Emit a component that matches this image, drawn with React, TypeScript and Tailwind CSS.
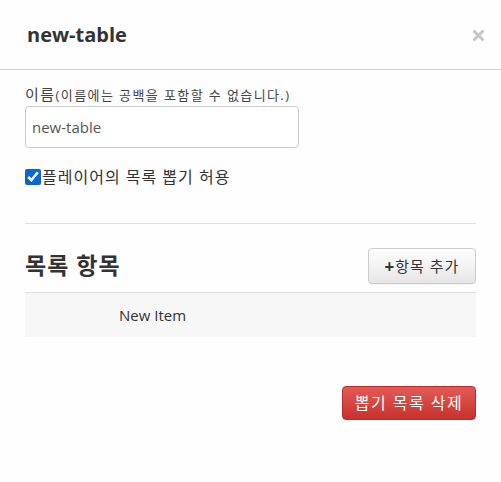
import React from "react";

const KR = { fontFamily: '"Open Sans", "Noto Sans CJK KR", sans-serif' };

export default function App() {
  return (
    <div className="w-[501px] h-[482px] bg-[#fefefe] text-[#333]" style={KR}>
      <div className="h-[70px] border-b border-[#d0d0d0] flex items-center justify-between pl-[27px] pr-[17px]">
        <h4 className="text-[20px] font-bold leading-none text-[#333]">new-table</h4>
        <svg width="11" height="11" viewBox="0 0 11 11" className="mt-[1px]">
          <path d="M1.5 1.5 L9.5 9.5 M9.5 1.5 L1.5 9.5" stroke="#c6c6c6" strokeWidth="3" strokeLinecap="square" />
        </svg>
      </div>
      <div className="px-[25px] pt-[14px]">
        <label className="block text-[15px] leading-[20px] text-[#444]">
          <span className="tracking-[1.5px]">이름</span>
          <span className="text-[13px] tracking-[1.4px]">(이름에는 공백을 포함할 수 없습니다.)</span>
        </label>
        <div className="mt-[1px] w-[274px] h-[42px] border border-[#ccc] rounded-[4px] bg-white flex items-center px-[6px] text-[15px] text-[#555]">
          new-table
        </div>
        <label className="mt-[19px] flex items-center text-[16px] leading-[20px] text-[#333]">
          <input type="checkbox" defaultChecked className="w-[16px] h-[16px] m-0 accent-[#0a66d8]" />
          <span className="ml-[1px] tracking-[1px]">플레이어의 목록 뽑기 허용</span>
        </label>
        <div className="mt-[36px] border-t border-[#e0e0e0]" />
        <div className="mt-[24px] flex items-center justify-between h-[36px]">
          <h3 className="text-[23px] font-bold text-[#333] leading-none tracking-[1px] mt-[-1px]">목록 항목</h3>
          <button className="h-[36px] w-[108px] rounded-[4px] border border-[#ccc] bg-gradient-to-b from-white to-[#e6e6e6] text-[15px] text-[#333] flex items-center justify-center shadow-[0_1px_1px_rgba(0,0,0,0.05)] tracking-[1px]">
            <span className="font-bold text-[17px] leading-none">+</span>항목 추가
          </button>
        </div>
        <div className="mt-[8px] border-t border-[#ddd] bg-[#f7f7f7] h-[45px] flex items-center pl-[94px] text-[15px] text-[#333]">
          New Item
        </div>
        <div className="mt-[49px] flex justify-end">
          <button className="h-[34px] w-[134px] rounded-[4px] border border-[#b92c28] bg-gradient-to-b from-[#e35a55] to-[#c9302c] text-white text-[16px] flex items-center justify-center tracking-[1.5px]">
            뽑기 목록 삭제
          </button>
        </div>
      </div>
    </div>
  );
}
